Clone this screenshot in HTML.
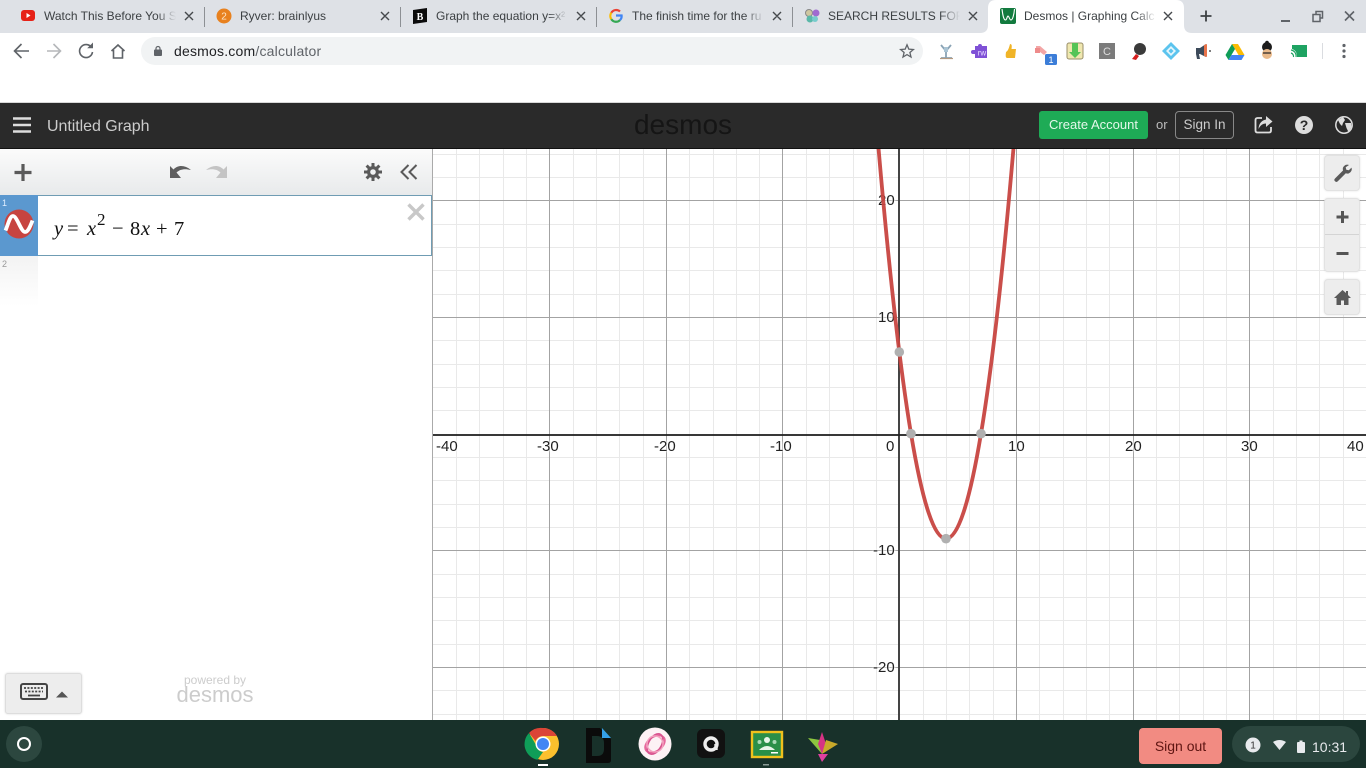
<!DOCTYPE html>
<html><head><meta charset="utf-8"><title>Desmos | Graphing Calculator</title>
<style>
html,body{margin:0;padding:0;width:1366px;height:768px;overflow:hidden;background:#fff;font-family:"Liberation Sans",sans-serif}
.a{position:absolute;white-space:nowrap}
svg{position:absolute;overflow:visible}
.tt{position:absolute;top:8px;font-size:12px;line-height:16px;color:#3c4043;white-space:nowrap;overflow:hidden;-webkit-mask-image:linear-gradient(90deg,#000 85%,transparent);mask-image:linear-gradient(90deg,#000 85%,transparent)}
.sep{position:absolute;top:7px;width:1px;height:20px;background:#8d9094}
.m{position:absolute;font-family:"Liberation Serif",serif;font-size:20.5px;color:#111;line-height:24px;top:217px}
.i{font-style:italic}
.l{position:absolute;font-size:15px;line-height:18px;color:#222;white-space:nowrap;text-shadow:0 0 2px #fff,0 0 2px #fff,0 0 3px #fff}
.gb{position:absolute;left:1324px;width:36px;background:#ededed;border:1px solid #e2e2e2;box-sizing:border-box;border-radius:4px;box-shadow:0 0 2px rgba(0,0,0,.12)}
</style></head><body>
<!-- tab strip -->
<div class="a" style="left:0;top:0;width:1366px;height:33px;background:#dee1e6"></div>
<svg style="left:0;top:0" width="1366" height="33">
<path d="M980 33q8 0 8-8V8q0-8 8-8h180q8 0 8 8v17q0 8 8 8z" fill="#fff"/>
</svg>
<div class="sep" style="left:204px"></div><div class="sep" style="left:400px"></div><div class="sep" style="left:596px"></div><div class="sep" style="left:792px"></div>
<svg style="left:20px;top:9px" width="16" height="14"><rect x="1" y="1" width="14" height="11" rx="3" fill="#e62117"/><path d="M6.500 4v5l4-2.500z" fill="#fff"/></svg>
<div class="tt" style="left:44px;width:132px">Watch This Before You S</div>
<svg style="left:216px;top:8px" width="16" height="16"><circle cx="8" cy="8" r="7.500" fill="#e8811e"/><text x="8" y="11.500" font-size="10" font-family="Liberation Sans" fill="#fde6c8" text-anchor="middle">2</text></svg>
<div class="tt" style="left:240px;width:132px">Ryver: brainlyus</div>
<svg style="left:412px;top:8px" width="16" height="16"><path d="M1 2l14-2v14l-14 2z" fill="#0b0b0b"/><text x="8" y="12" font-size="10" font-weight="bold" font-family="Liberation Serif" fill="#fff" text-anchor="middle">B</text></svg>
<div class="tt" style="left:436px;width:132px">Graph the equation y=x²</div>
<svg style="left:608px;top:8px" width="16" height="16" viewBox="0 0 16 16"><path d="M3.300 4.800A5.600 5.600 0 0 1 12 3.500" stroke="#ea4335" stroke-width="2.200" fill="none"/><path d="M3.300 4.800a5.600 5.600 0 0 0 0 6.400" stroke="#fbbc05" stroke-width="2.200" fill="none"/><path d="M3.300 11.200a5.600 5.600 0 0 0 8.700.9" stroke="#34a853" stroke-width="2.200" fill="none"/><path d="M12 12.100A5.600 5.600 0 0 0 13.600 7.500H8" stroke="#4285f4" stroke-width="2.200" fill="none"/></svg>
<div class="tt" style="left:632px;width:132px">The finish time for the ru</div>
<svg style="left:804px;top:8px" width="16" height="16"><circle cx="5" cy="5" r="3.500" fill="#cfc7a0" stroke="#888"/><circle cx="12" cy="5" r="3.500" fill="#a06bd0"/><circle cx="6" cy="11" r="3.500" fill="#5ab8a8"/><circle cx="11" cy="11" r="3" fill="#7cc"/></svg>
<div class="tt" style="left:828px;width:132px">SEARCH RESULTS FOR: p</div>
<svg style="left:1000px;top:8px" width="16" height="16"><rect width="16" height="16" rx="2" fill="#127a3e"/><path d="M2 1c1 8 2 11 3.500 11S7 8 8 8s1.500 4 3 4 3-5 3.500-11" stroke="#fff" fill="none" stroke-width="1.100"/></svg>
<div class="tt" style="left:1024px;width:132px">Desmos | Graphing Calc</div>
<svg style="left:0;top:0" width="1366" height="33" fill="none" stroke="#45484c" stroke-width="1.400">
<path d="M185 12l8 8m0-8l-8 8M381 12l8 8m0-8l-8 8M577 12l8 8m0-8l-8 8M773 12l8 8m0-8l-8 8M969 12l8 8m0-8l-8 8M1164 12l8 8m0-8l-8 8"/>
<path d="M1206 10.500v11M1200.500 16h11" stroke="#3c4043" stroke-width="1.800"/>
<path d="M1281 21h9" stroke="#5f6368" stroke-width="2"/>
<path d="M1313 14.500h7v7h-7zM1316 14.500v-3h6.500v6.500h-2.500" stroke="#5f6368" stroke-width="1.500"/>
<path d="M1345 11.500l9 9m0-9l-9 9" stroke="#5f6368" stroke-width="1.600"/>
</svg>
<!-- toolbar -->
<svg style="left:0;top:33px" width="140" height="36" fill="none" stroke-width="1.600">
<path d="M29 18H15m6.500-7L14.500 18l7 7" stroke="#5f6368"/>
<path d="M61 18H47m6.500-7l7 7-7 7" stroke="#b5b7ba"/>
<path d="M91.500 14.500A6.500 6.500 0 1 0 92.500 19" stroke="#5f6368"/><path d="M93 9.500v5.800h-5.800z" fill="#5f6368"/>
<path d="M111.500 18L118 12l6.500 6M113.500 17v8h9v-8" stroke="#5f6368"/>
</svg>
<div class="a" style="left:141px;top:37px;width:782px;height:28px;border-radius:14px;background:#f1f3f4"></div>
<svg style="left:153px;top:45px" width="10" height="12"><rect x="1" y="4.500" width="8" height="6.500" rx="1" fill="#5f6368"/><path d="M3 5V3.500a2 2 0 0 1 4 0V5" stroke="#5f6368" fill="none" stroke-width="1.200"/></svg>
<div class="a" style="left:174px;top:42px;font-size:14px;line-height:18px;color:#202124;letter-spacing:.2px">desmos.com<span style="color:#5f6368">/calculator</span></div>
<svg style="left:899px;top:43px" width="16" height="16" viewBox="0 0 16 16"><path d="M8 1.800l1.800 4.300 4.600.4-3.500 3 1.100 4.500L8 11.600l-4 2.400 1.100-4.500-3.500-3 4.600-.4z" fill="none" stroke="#5f6368" stroke-width="1.300"/></svg>
<!-- extensions -->
<svg style="left:936px;top:40px" width="400" height="24" viewBox="936 40 400 24">
<path d="M941 45l5 6 5-6M946 51v7M941 58h11" stroke="#8aa3b5" stroke-width="1.800" fill="none"/><path d="M944 47h4v5h-4z" fill="#aac4d4"/><path d="M940 58.500h13" stroke="#b59a80" stroke-width="1.200"/>
<path d="M975 46h3a2 2 0 0 1 4 0h5v12h-12v-4h-2a2 2 0 0 1 0-4h2z" fill="#7f51d6"/><text x="982" y="55.500" font-size="8" font-family="Liberation Sans" fill="#e8dcff" text-anchor="middle">rw</text>
<path d="M1006 52c2-1 3-4 4-8 2 0 2 2 1.500 5h4.500l-1 9h-8q-2 0-1-6z" fill="#f0b428"/>
<path d="M1036 46h4l7 6-3 3-4-3-4 1z" fill="#f3a6a6"/><rect x="1035" y="48" width="5" height="5" fill="#ee8b8b"/>
<rect x="1045" y="54" width="12" height="11" rx="1.500" fill="#3b7dd8"/><text x="1051" y="63" font-size="9" font-family="Liberation Sans" fill="#fff" text-anchor="middle">1</text>
<rect x="1067" y="43" width="16" height="16" rx="2" fill="#f0e7b0" stroke="#9a8f6a"/><path d="M1072 43h6v9h3l-6 6-6-6h3z" fill="#55c456"/>
<rect x="1099" y="43" width="16" height="16" fill="#7b7b7b"/><text x="1107" y="55" font-size="11" font-family="Liberation Sans" fill="#ddd" text-anchor="middle">C</text>
<circle cx="1140" cy="49" r="6" fill="#3a3a3a"/><path d="M1136 54l-4 5 4 1 3-4z" fill="#d41e1e"/>
<path d="M1171 42l9 9-9 9-9-9z" fill="#5cc4ee"/><path d="M1171 46l5 5-5 5-5-5z" fill="#e4f6fc"/><path d="M1171 48.500l2.500 2.500-2.500 2.500-2.500-2.500z" fill="#5cc4ee"/>
<path d="M1196 48h4l6-4v13l-6-3h-1l1 5h-3l-1-5z" fill="#3c4a5a"/><path d="M1204 45l3-1v13l-3-1z" fill="#e8734a"/><circle cx="1210" cy="51" r="1" fill="#555"/>
<path d="M1232 44h6l6.500 11h-6z" fill="#fbbc04"/><path d="M1232 44l-6.500 11 3 5 6.500-11z" fill="#0f9d58"/><path d="M1228.500 60h13l3-5h-13z" fill="#4285f4"/>
<circle cx="1267" cy="47" r="5" fill="#1c1c1c"/><circle cx="1267" cy="42.500" r="1.800" fill="#1c1c1c"/><circle cx="1267" cy="54" r="5" fill="#e9b98a"/><path d="M1263 53h8" stroke="#222" stroke-width="1.200"/>
<path d="M1292 45h15v12h-10c0-5-2-7-5-8z" fill="#1ea362"/><path d="M1291 50a6 6 0 0 1 5 7M1291 53a3.500 3.500 0 0 1 2.500 4" stroke="#1ea362" fill="none" stroke-width="1.200"/>
<path d="M1322.500 43v16" stroke="#dadce0"/>
<circle cx="1344" cy="45.500" r="1.600" fill="#5f6368"/><circle cx="1344" cy="51" r="1.600" fill="#5f6368"/><circle cx="1344" cy="56.500" r="1.600" fill="#5f6368"/>
</svg>
<!-- page graph -->
<div class="a" style="left:0;top:102px;width:1366px;height:1px;background:#d8d8d8"></div>
<svg style="left:0;top:0" width="1366" height="768">
<g fill="none" shape-rendering="crispEdges">
<path stroke="#e9e9e9" d="M456.500 149V720M479.500 149V720M503.500 149V720M526.500 149V720M573.500 149V720M596.500 149V720M619.500 149V720M643.500 149V720M689.500 149V720M713.500 149V720M736.500 149V720M759.500 149V720M806.500 149V720M829.500 149V720M853.500 149V720M876.500 149V720M923.500 149V720M946.500 149V720M969.500 149V720M993.500 149V720M1039.500 149V720M1063.500 149V720M1086.500 149V720M1109.500 149V720M1156.500 149V720M1179.500 149V720M1203.500 149V720M1226.500 149V720M1273.500 149V720M1296.500 149V720M1319.500 149V720M1343.500 149V720"/>
<path stroke="#e9e9e9" d="M433 154.500H1366M433 177.500H1366M433 224.500H1366M433 247.500H1366M433 270.500H1366M433 294.500H1366M433 340.500H1366M433 364.500H1366M433 387.500H1366M433 410.500H1366M433 457.500H1366M433 480.500H1366M433 504.500H1366M433 527.500H1366M433 574.500H1366M433 597.500H1366M433 620.500H1366M433 644.500H1366M433 690.500H1366M433 714.500H1366"/>
<path stroke="#a3a3a3" d="M549.500 149V720M666.500 149V720M782.500 149V720M1016.500 149V720M1133.500 149V720M1249.500 149V720M433 200.500H1366M433 317.500H1366M433 550.500H1366M433 667.500H1366"/>
<path stroke="#444" d="M898.500 149V720M899.500 149V720"/>
<path stroke="#222" d="M433 434.500H1366M433 435.500H1366" stroke-opacity=".9"/>
</g>
</svg>
<div class="l" style="left:436px;top:438px">-40</div>
<div class="l" style="left:537px;top:438px">-30</div>
<div class="l" style="left:654px;top:438px">-20</div>
<div class="l" style="left:770px;top:438px">-10</div>
<div class="l" style="left:886px;top:438px">0</div>
<div class="l" style="left:1008px;top:438px">10</div>
<div class="l" style="left:1125px;top:438px">20</div>
<div class="l" style="left:1241px;top:438px">30</div>
<div class="l" style="left:1347px;top:438px">40</div>
<div class="l" style="left:878px;top:192px">20</div>
<div class="l" style="left:878px;top:309px">10</div>
<div class="l" style="left:873px;top:542px">-10</div>
<div class="l" style="left:873px;top:659px">-20</div>
<svg style="left:0;top:0" width="1366" height="768">
<defs><clipPath id="c"><rect x="433" y="149" width="933" height="571"/></clipPath></defs>
<path d="M876 118.700Q946 958.700 1016 118.700" fill="none" stroke="#c74440" stroke-width="3.800" clip-path="url(#c)" opacity=".95"/>
<g fill="#b0b0b0"><circle cx="899.300" cy="352" r="4.800"/><circle cx="911" cy="433.700" r="4.800"/><circle cx="981" cy="433.700" r="4.800"/><circle cx="946" cy="538.700" r="4.800"/></g>
</svg>
<!-- desmos header -->
<div class="a" style="left:0;top:103px;width:1366px;height:46px;background:#2a2a2a;border-bottom:1px solid #111;box-sizing:border-box"></div>
<svg style="left:13px;top:117px" width="18" height="16"><path d="M0 1.500h18M0 8h18M0 14.500h18" stroke="#ddd" stroke-width="2.400"/></svg>
<div class="a" style="left:47px;top:117px;font-size:16px;line-height:20px;color:#ccc;letter-spacing:-.05px">Untitled Graph</div>
<div class="a" style="left:632px;top:107px;width:102px;text-align:center;font-size:28px;line-height:36px;color:#151515">desmos</div>
<div class="a" style="left:1039px;top:111px;width:109px;height:28px;border-radius:3px;background:#1eab56;color:#e4f7ea;font-size:13px;line-height:28px;text-align:center">Create Account</div>
<div class="a" style="left:1156px;top:116px;font-size:13px;line-height:18px;color:#bbb">or</div>
<div class="a" style="left:1175px;top:111px;width:59px;height:28px;border-radius:4px;border:1px solid #888;box-sizing:border-box;color:#ccc;font-size:13.500px;line-height:26px;text-align:center">Sign In</div>
<svg style="left:1254px;top:115px" width="100" height="20" viewBox="0 0 100 20">
<path d="M8 3H3.500Q1.500 3 1.500 5v10.500q0 2 2 2H15q2 0 2-2V12" stroke="#ddd" fill="none" stroke-width="1.800"/>
<path d="M12 1l6.500 5.500L12 12V8.500Q7 8.500 4.500 14 5 6 12 4.500z" fill="#ddd"/>
<circle cx="50" cy="10" r="9" fill="#ddd"/><text x="50" y="15" font-size="14" font-weight="bold" font-family="Liberation Sans" fill="#2a2a2a" text-anchor="middle">?</text>
<circle cx="90" cy="10" r="8.200" fill="#2a2a2a" stroke="#ddd" stroke-width="1.500"/><path d="M84 5l5-3 2 3-2 3-1 3-2-2zM91 8l6 0 .5 4-3 5-2-4z" fill="#ddd"/>
</svg>
<!-- expression panel -->
<div class="a" style="left:0;top:149px;width:432px;height:571px;background:#fff;border-right:1px solid #aaa"></div>
<div class="a" style="left:0;top:149px;width:432px;height:46px;background:linear-gradient(#fbfbfb,#e8eaeb)"></div>
<svg style="left:0;top:149px" width="432" height="46">
<path d="M23 15v17M14.500 23.500h17" stroke="#5a5a5a" stroke-width="3.200"/>
<path d="M170 29V17l3.500 3.500C178 15.500 185 16 191 21 185 19.500 180 20 176.500 23.500L181 29z" fill="#5f5f5f"/>
<path d="M227 29V17l-3.500 3.500C219 15.500 212 16 206 21 212 19.500 217 20 220.500 23.500L216 29z" fill="#c4c4c4"/>
<circle cx="373" cy="23" r="6" fill="#5a5a5a"/><path d="M373 14v18M364 23h18M366.600 16.600l12.800 12.800M379.400 16.600l-12.800 12.800" stroke="#5a5a5a" stroke-width="3"/><circle cx="373" cy="23" r="2.800" fill="#f1f2f3"/>
<path d="M408.500 16l-7 7 7 7M416.500 16l-7 7 7 7" fill="none" stroke="#5a5a5a" stroke-width="2"/>
</svg>
<div class="a" style="left:0;top:195px;width:432px;height:61px;border:1px solid #6f9cb3;box-sizing:border-box;background:#fff"></div>
<div class="a" style="left:0;top:195px;width:38px;height:61px;background:#5b98cf"></div>
<div class="a" style="left:2px;top:198px;font-size:9px;line-height:11px;color:#dfeeff">1</div>
<svg style="left:4px;top:209px" width="30" height="30"><circle cx="15" cy="15" r="14.500" fill="#c74440"/><path d="M1.500 21.500C4.500 14 6 7 9 7 13 7 17 23 21 23 24 23 26 18 28.500 11.500" fill="none" stroke="#fff" stroke-width="3.800"/></svg>
<div class="m i" style="left:54px">y</div>
<div class="m" style="left:67px">=</div>
<div class="m i" style="left:87px">x</div>
<div class="m" style="left:97px;top:208px;font-size:17px">2</div>
<div class="m" style="left:112px">−</div>
<div class="m" style="left:130px">8</div>
<div class="m i" style="left:141px">x</div>
<div class="m" style="left:156px">+</div>
<div class="m" style="left:174px">7</div>
<svg style="left:407px;top:203px" width="18" height="18"><path d="M1.500 1.500l15 15m0-15l-15 15" stroke="#c8c8c8" stroke-width="3.400"/></svg>
<div class="a" style="left:0;top:256px;width:38px;height:50px;background:linear-gradient(#f3f3f3,#fff)"></div>
<div class="a" style="left:2px;top:259px;font-size:9px;line-height:11px;color:#999">2</div>
<!-- keyboard -->
<div class="a" style="left:5px;top:673px;width:77px;height:41px;background:#ededed;border:1px solid #ddd;border-radius:3px;box-sizing:border-box;box-shadow:0 0 2px rgba(0,0,0,.15)"></div>
<svg style="left:20px;top:683px" width="50" height="20">
<rect x="1" y="1" width="26" height="15" rx="2" fill="none" stroke="#444" stroke-width="2"/>
<path d="M4 5h20M5 8.500h18" stroke="#444" stroke-width="1.800" stroke-dasharray="2 1.400"/><path d="M8 12.500h12" stroke="#444" stroke-width="1.800"/>
<path d="M36 14.500l6-6 6 6z" fill="#555"/>
</svg>
<div class="a" style="left:176px;top:673px;width:78px;text-align:center;font-size:12px;line-height:14px;color:#ccc">powered by</div>
<div class="a" style="left:175px;top:681px;width:80px;text-align:center;font-size:22px;line-height:28px;color:#ccc">desmos</div>
<!-- graph buttons -->
<div class="gb" style="top:155px;height:36px"></div>
<div class="gb" style="top:198px;height:74px"></div>
<div class="a" style="left:1325px;top:234px;width:34px;height:1px;background:#d4d4d4"></div>
<div class="gb" style="top:279px;height:36px"></div>
<svg style="left:1324px;top:155px" width="36" height="160">
<path d="M25 10a4.500 4.500 0 0 0-6 5.500l-8 8a1.800 1.800 0 0 0 2.800 2.800l8-8a4.500 4.500 0 0 0 5.700-5.700l-2.700 2.700-2.500-.6-.6-2.400z" fill="#5a5a5a"/>
<path d="M18.500 56v12M12.500 62h12" stroke="#555" stroke-width="3"/>
<path d="M12.500 98.500h12" stroke="#555" stroke-width="3"/>
<path d="M18.500 135l-8.500 8h2.500v7h4.500v-4.500h3v4.500h4.500v-7h2.500l-3-3v-4h-2v2z" fill="#5a5a5a"/>
</svg>
<!-- shelf -->
<div class="a" style="left:0;top:720px;width:1366px;height:48px;background:#18312a"></div>
<div class="a" style="left:6px;top:726px;width:36px;height:36px;border-radius:50%;background:#2c473f"></div>
<div class="a" style="left:17px;top:737px;border:2px solid #fff;border-radius:50%;width:10px;height:10px"></div>
<svg style="left:520px;top:722px" width="320" height="46" viewBox="520 722 320 46">
<circle cx="543" cy="744" r="16" fill="#fbc02d"/>
<path d="M543 728a16 16 0 0 1 13.900 8H543a8 8 0 0 0-7.500 5L529 733a16 16 0 0 1 14-5z" fill="#db4437"/>
<path d="M529 733l7 12a8 8 0 0 0 7 7l-5.500 7.800A16 16 0 0 1 529 733z" fill="#0f9d58"/>
<circle cx="543" cy="744" r="7.500" fill="#fff"/><circle cx="543" cy="744" r="6" fill="#4285f4"/>
<rect x="538" y="764" width="10" height="2" fill="#fff"/>
<path d="M586 728h14l11 11v21q0 3-3 3h-22z" fill="#0b0b0b"/><path d="M592 736h5q7 0 7 7v6q0 7-7 7h-5z" fill="#18312a"/><path d="M602 728l9 10h-9z" fill="#34a0e8"/><path d="M600 727l2 0v1l-2 0z" fill="#18312a"/>
<circle cx="655" cy="744" r="16.500" fill="#fdf2f5"/><ellipse cx="655" cy="744" rx="11" ry="7" transform="rotate(-35 655 744)" fill="none" stroke="#e7679c" stroke-width="1.800"/><ellipse cx="655" cy="744" rx="6.500" ry="11" transform="rotate(30 655 744)" fill="none" stroke="#d9548f" stroke-width="1.800"/><circle cx="655" cy="744" r="8" fill="none" stroke="#f4a3c0" stroke-width="1.400"/>
<rect x="697" y="729" width="28" height="29" rx="6" fill="#111"/><circle cx="711" cy="744" r="6" fill="none" stroke="#eee" stroke-width="3.400"/><path d="M716 744v6" stroke="#eee" stroke-width="3.400"/>
<rect x="752" y="732" width="30" height="25" fill="#2a8f48" stroke="#f0c11c" stroke-width="2.400"/><circle cx="767" cy="740" r="3" fill="#e8f5e9"/><circle cx="759.500" cy="742" r="2" fill="#a9d8b6"/><circle cx="774.500" cy="742" r="2" fill="#a9d8b6"/><path d="M759 750q8-8 16 0z" fill="#e8f5e9"/><rect x="771" y="752" width="7" height="1.500" fill="#fff"/>
<rect x="763" y="764" width="6" height="1.500" fill="#8a9a95"/>
<path d="M808 738l14 16-2-14z" fill="#8cc63f"/><path d="M822 732l-4 12 4 10 4-10z" fill="#d63384"/><path d="M838 744l-16 10 4-14z" fill="#c8a92a"/><path d="M818 754l4 8 6-8z" fill="#e040a0"/>
</svg>
<div class="a" style="left:1139px;top:728px;width:83px;height:36px;border-radius:4px;background:#f28b82;color:#5e1512;font-size:14px;line-height:36px;text-align:center">Sign out</div>
<div class="a" style="left:1232px;top:726px;width:128px;height:36px;border-radius:18px;background:#2b463e"></div>
<svg style="left:1244px;top:736px" width="70" height="18">
<circle cx="9" cy="9" r="7.500" fill="#e8eaed"/><text x="9" y="12.500" font-size="10" font-family="Liberation Sans" fill="#333" text-anchor="middle">1</text>
<path d="M29 6q6.500-4 13 0l-6.500 8z" fill="#e8eaed"/>
<rect x="53" y="6" width="8" height="11" rx="1" fill="#e8eaed"/><rect x="55.500" y="4.500" width="3" height="2" fill="#e8eaed"/>
</svg>
<div class="a" style="left:1312px;top:738px;font-size:14px;line-height:18px;color:#e8eaed">10:31</div>
</body></html>
